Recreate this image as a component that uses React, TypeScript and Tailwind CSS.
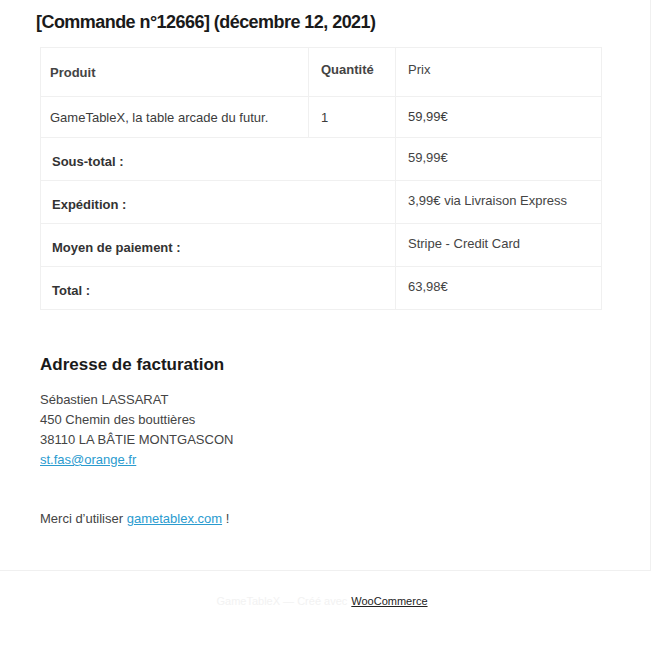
const rows = [
  { label: "Sous-total :", value: "59,99€" },
  { label: "Expédition :", value: "3,99€ via Livraison Express" },
  { label: "Moyen de paiement :", value: "Stripe - Credit Card" },
  { label: "Total :", value: "63,98€" },
];

export default function App() {
  return (
    <div className="w-[668px] h-[657px] bg-white font-['Liberation_Sans',Arial,sans-serif] text-[#3c3c3c] overflow-hidden">
      <div className="w-[651px] h-[571px] border-r border-b border-[#f0f0f0] pl-9 pt-[10px]">
        <h2 className="text-[18px] leading-[24px] font-bold text-[#1a1a1a] tracking-[-0.55px]">
          [Commande n°12666] (décembre 12, 2021)
        </h2>

        <table className="mt-[13px] ml-1 w-[562px] border border-[#f0f0f0] border-collapse text-[13px] leading-[16px]">
          <thead>
            <tr className="h-[49px]">
              <th className="w-[268px] border border-[#f0f0f0] px-[9px] pt-[2px] text-left font-bold text-[#444]">
                Produit
              </th>
              <th className="w-[87px] border border-[#f0f0f0] px-3 pb-[4px] text-left font-bold text-[#444]">
                Quantité
              </th>
              <th className="border border-[#f0f0f0] px-3 pb-[4px] text-left font-normal text-[#444]">
                Prix
              </th>
            </tr>
          </thead>
          <tbody>
            <tr className="h-[41px]">
              <td className="border border-[#f0f0f0] px-[9px] pt-[2px] align-middle">
                GameTableX, la table arcade du futur.
              </td>
              <td className="border border-[#f0f0f0] px-3 pt-[2px]">1</td>
              <td className="border border-[#f0f0f0] px-3">59,99€</td>
            </tr>
            {rows.map((r) => (
              <tr key={r.label} className="h-[43px]">
                <th
                  colSpan={2}
                  className="border border-[#f0f0f0] px-[11px] pt-[6px] text-left font-bold text-[#333]"
                >
                  {r.label}
                </th>
                <td className="border border-[#f0f0f0] px-3 pb-[3px] text-[#444]">
                  {r.value}
                </td>
              </tr>
            ))}
          </tbody>
        </table>

        <h2 className="mt-[44px] ml-1 text-[17px] leading-[22px] font-bold text-[#1a1a1a]">
          Adresse de facturation
        </h2>
        <address className="mt-[14px] ml-1 not-italic text-[13px] leading-[20px] text-[#444]">
          Sébastien LASSARAT
          <br />
          450 Chemin des bouttières
          <br />
          38110 LA BÂTIE MONTGASCON
          <br />
          <a href="#" className="text-[#2a9bcf] underline">
            st.fas@orange.fr
          </a>
        </address>

        <p className="mt-[39px] ml-1 text-[13px] leading-[20px] text-[#444]">
          Merci d’utiliser{" "}
          <a href="#" className="text-[#2a9bcf] underline">
            gametablex.com
          </a>{" "}
          !
        </p>
      </div>

      <div className="mt-[22px] flex justify-center text-[11px] leading-[16px]">
        <span className="ml-[-24px] text-[#f2f2f2]">GameTableX — Créé avec </span>
        <a href="#" className="ml-1 text-[#222] underline">
          WooCommerce
        </a>
      </div>
    </div>
  );
}
